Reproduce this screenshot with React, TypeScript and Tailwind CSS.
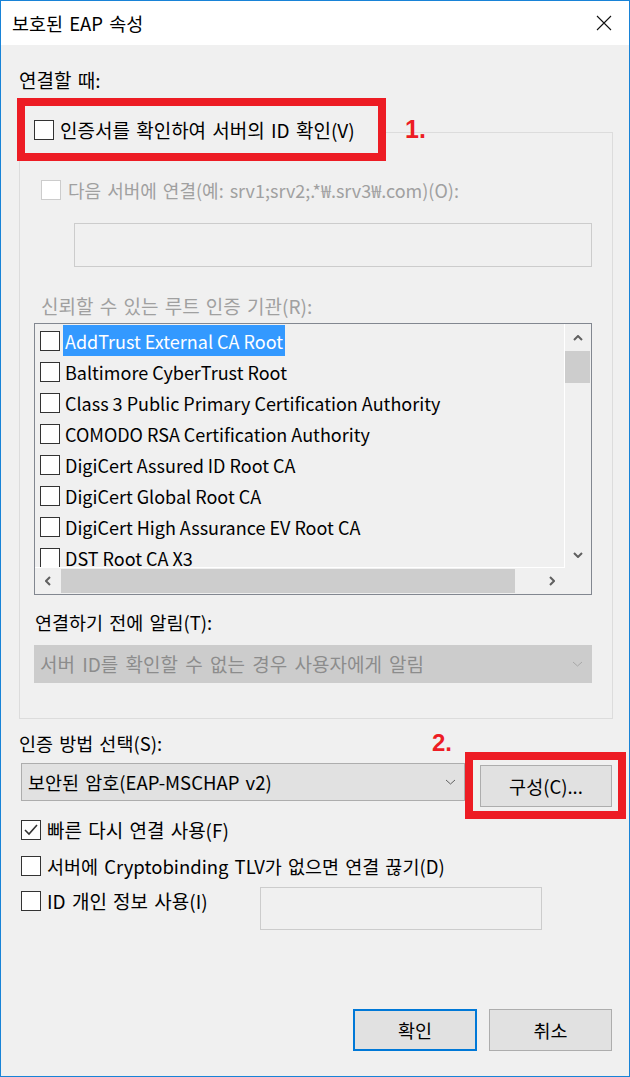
import React from 'react';

const certs = [
  'AddTrust External CA Root',
  'Baltimore CyberTrust Root',
  'Class 3 Public Primary Certification Authority',
  'COMODO RSA Certification Authority',
  'DigiCert Assured ID Root CA',
  'DigiCert Global Root CA',
  'DigiCert High Assurance EV Root CA',
  'DST Root CA X3',
];

const CheckBox = ({ checked = false, disabled = false }: { checked?: boolean; disabled?: boolean }) => (
  <span
    className={`flex h-5 w-5 shrink-0 items-center justify-center border bg-white ${
      disabled ? 'border-[#cccccc]' : 'border-[#333333]'
    }`}
  >
    {checked && (
      <svg width="18" height="18" viewBox="0 0 18 18">
        <polyline points="3,9 7,13 15,4" fill="none" stroke="#333333" strokeWidth="1.6" />
      </svg>
    )}
  </span>
);

const Chevron = ({ dir, color = '#606060', w = 10, h = 6, sw = 2 }: { dir: 'up' | 'down' | 'left' | 'right'; color?: string; w?: number; h?: number; sw?: number }) => {
  const pts = {
    up: `1,${h - 1} ${w / 2},1 ${w - 1},${h - 1}`,
    down: `1,1 ${w / 2},${h - 1} ${w - 1},1`,
    left: `${w - 1},1 1,${h / 2} ${w - 1},${h - 1}`,
    right: `1,1 ${w - 1},${h / 2} 1,${h - 1}`,
  }[dir];
  return (
    <svg width={w} height={h} viewBox={`0 0 ${w} ${h}`}>
      <polyline points={pts} fill="none" stroke={color} strokeWidth={sw} />
    </svg>
  );
};

export default function App() {
  return (
    <div className="flex h-[1077px] w-[630px] flex-col border border-[#1883d7] bg-[#f0f0f0] font-['Noto_Sans_CJK_KR',sans-serif] text-[18px] text-black [word-spacing:2px]">
      {/* title bar */}
      <div className="flex h-[44px] items-center bg-white pl-[11px]">
        <span className="text-[18.5px] leading-6">보호된 EAP 속성</span>
        <svg className="ml-auto mr-[17px]" width="16" height="16" viewBox="0 0 16 16">
          <path d="M1 1 L15 15 M15 1 L1 15" stroke="#111" strokeWidth="1.1" fill="none" />
        </svg>
      </div>

      <div className="flex flex-1 flex-col pl-[18px]">
        <div className="mt-[23px] h-6 text-[19px] leading-6">연결할 때:</div>

        {/* group box */}
        <div className="mt-[40px] flex w-[594px] flex-col border border-[#dcdcdc] pb-[35px]">
          <div className="-ml-[3px] -mt-[35px] flex items-center">
            <div className="flex h-[63px] w-[369px] items-center border-8 border-[#ed1c24] bg-[#f0f0f0] pl-[9px]">
              <CheckBox />
              <span className="ml-[6px] text-[19px] leading-6">인증서를 확인하여 서버의 ID 확인(V)</span>
            </div>
            <span className="ml-[19px] font-['Liberation_Sans',sans-serif] text-[25px] font-bold leading-none text-[#ed1c24]">1.</span>
          </div>

          <div className="ml-[21px] mt-[17px] flex h-6 items-center text-[#a0a0a0]">
            <CheckBox disabled />
            <span className="ml-[7px] leading-6">다음 서버에 연결(예: srv1;srv2;.*₩.srv3₩.com)(O):</span>
          </div>

          <div className="ml-[54px] mt-[21px] h-[44px] w-[518px] border border-[#cccccc] bg-[#f0f0f0]" />

          <div className="ml-[21px] mt-[27px] h-6 text-[19px] leading-6 text-[#a0a0a0]">신뢰할 수 있는 루트 인증 기관(R):</div>

          {/* list box */}
          <div className="ml-[14px] mt-[5px] grid h-[272px] w-[558px] grid-cols-[530px_26px] grid-rows-[244px_26px] border border-[#828790] bg-[#f0f0f0]">
            <div className="overflow-hidden border-b border-r border-white pt-[1px] text-[18px] [word-spacing:0px]">
              {certs.map((c, i) => (
                <div key={c} className="flex h-[31px] items-center pl-[5px]">
                  <CheckBox />
                  <span
                    className={`ml-[3px] flex h-[31px] items-center whitespace-nowrap px-[2px] leading-6 ${
                      i === 0 ? 'bg-[#3399ff] text-white' : ''
                    }`}
                  >
                    {c}
                  </span>
                </div>
              ))}
            </div>
            <div className="flex flex-col items-center">
              <div className="flex h-[27px] items-center">
                <Chevron dir="up" />
              </div>
              <div className="h-[32px] w-[25px] self-start bg-[#cdcdcd]" />
              <div className="mt-auto flex h-[27px] items-center">
                <Chevron dir="down" />
              </div>
            </div>
            <div className="flex items-center">
              <div className="flex w-[26px] justify-center">
                <Chevron dir="left" w={6} h={10} />
              </div>
              <div className="h-[24px] w-[454px] bg-[#cdcdcd]" />
              <div className="ml-auto flex w-[26px] justify-center">
                <Chevron dir="right" w={6} h={10} />
              </div>
            </div>
            <div />
          </div>

          <div className="ml-[15px] mt-[15px] h-6 text-[18.5px] leading-6">연결하기 전에 알림(T):</div>

          <div className="ml-[14px] mt-[11px] flex h-[38px] w-[558px] items-center bg-[#cccccc] pl-[6px] pr-[9px] text-[#8c8c8c]">
            <span className="text-[19px] leading-6 [word-spacing:3px]">서버 ID를 확인할 수 없는 경우 사용자에게 알림</span>
            <span className="ml-auto">
              <Chevron dir="down" color="#a8a8a8" w={11} h={6} sw={1} />
            </span>
          </div>
        </div>

        <div className="mt-[12px] flex h-6 items-center">
          <span className="text-[18.5px] leading-6">인증 방법 선택(S):</span>
          <span className="ml-auto mr-[177px] font-['Liberation_Sans',sans-serif] text-[24px] font-bold leading-none text-[#ed1c24]">2.</span>
        </div>

        <div className="mt-[8px] flex items-start">
          <div className="ml-[2px] flex h-[38px] w-[444px] items-center border border-[#adadad] bg-[#e1e1e1] pl-[6px] pr-[8px]">
            <span className="text-[18.5px] leading-6">보안된 암호(EAP-MSCHAP v2)</span>
            <span className="ml-auto">
              <Chevron dir="down" w={11} h={6} sw={1} />
            </span>
          </div>
          <div className="-mb-[18px] -mt-[11px] h-[67px] w-[161px] border-8 border-[#ed1c24] pl-[7px] pt-[5px]">
            <div className="flex h-[42px] w-[132px] items-center justify-center border border-[#adadad] bg-[#e1e1e1]">
              <span className="text-[18.5px] leading-6">구성(C)...</span>
            </div>
          </div>
        </div>

        <div className="ml-[2px] mt-[17px] flex h-6 items-center">
          <CheckBox checked />
          <span className="ml-[6px] text-[19px] leading-6">빠른 다시 연결 사용(F)</span>
        </div>

        <div className="ml-[2px] mt-[12px] flex h-6 items-center">
          <CheckBox />
          <span className="ml-[6px] text-[18.5px] leading-6">서버에 Cryptobinding TLV가 없으면 연결 끊기(D)</span>
        </div>

        <div className="mt-[9px] flex items-start">
          <div className="ml-[2px] mt-[2px] flex h-6 w-[239px] items-center">
            <CheckBox />
            <span className="ml-[6px] text-[19px] leading-6">ID 개인 정보 사용(I)</span>
          </div>
          <div className="h-[43px] w-[282px] border border-[#cccccc] bg-[#f0f0f0]" />
        </div>

        <div className="mb-[25px] mr-[17px] mt-auto flex justify-end gap-[12px]">
          <div className="flex h-[42px] w-[124px] items-center justify-center border-2 border-[#0078d7] bg-[#e1e1e1]">
            <span className="text-[18.5px] leading-6">확인</span>
          </div>
          <div className="flex h-[42px] w-[123px] items-center justify-center border border-[#adadad] bg-[#e1e1e1]">
            <span className="text-[18.5px] leading-6">취소</span>
          </div>
        </div>
      </div>
    </div>
  );
}
